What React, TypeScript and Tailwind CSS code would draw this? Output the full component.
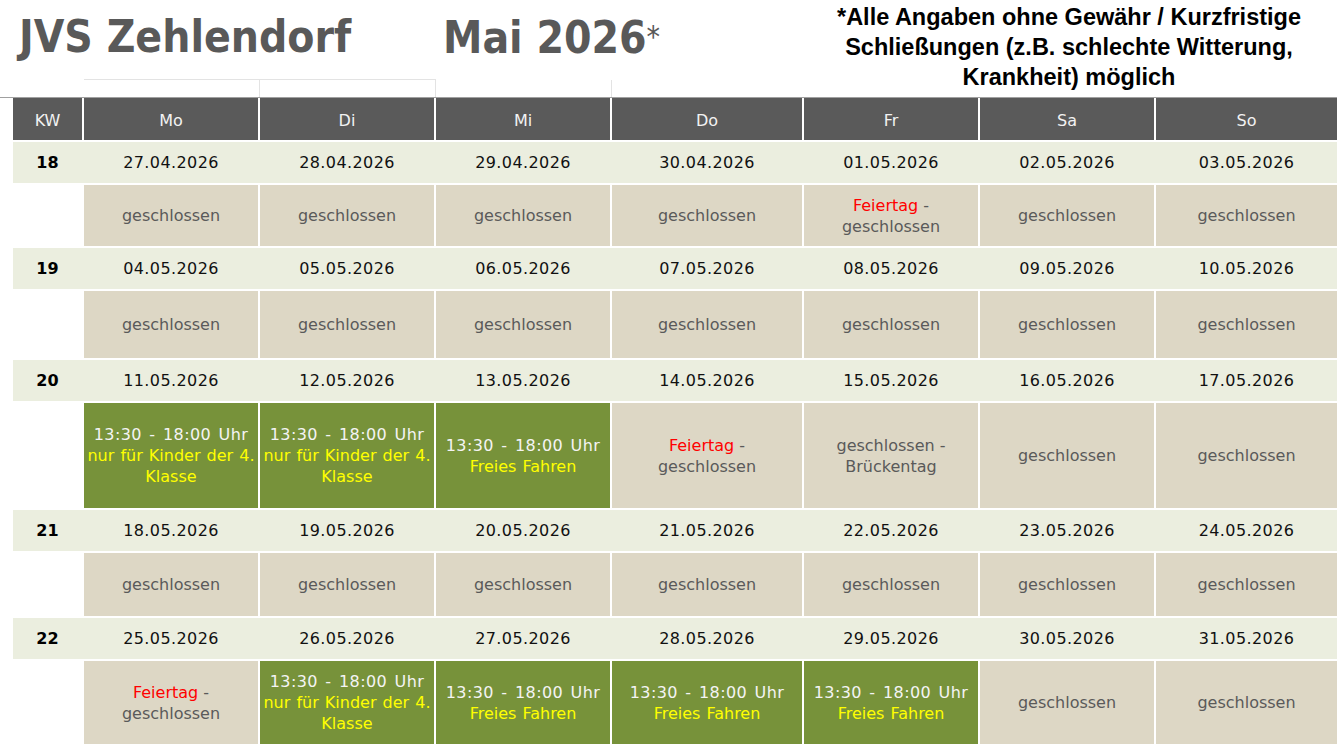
import React from 'react';

type Cell =
  | { kind: 'closed' }
  | { kind: 'holiday' }
  | { kind: 'bridge' }
  | { kind: 'open'; note: string };

interface Week {
  kw: number;
  dates: string[];
  cells: Cell[];
  height: string;
}

const C: Cell = { kind: 'closed' };
const HOL: Cell = { kind: 'holiday' };
const KIDS: Cell = { kind: 'open', note: 'nur für Kinder der 4. Klasse' };
const FREE: Cell = { kind: 'open', note: 'Freies Fahren' };

const weeks: Week[] = [
  {
    kw: 18,
    dates: ['27.04.2026', '28.04.2026', '29.04.2026', '30.04.2026', '01.05.2026', '02.05.2026', '03.05.2026'],
    cells: [C, C, C, C, HOL, C, C],
    height: 'h-[61px]',
  },
  {
    kw: 19,
    dates: ['04.05.2026', '05.05.2026', '06.05.2026', '07.05.2026', '08.05.2026', '09.05.2026', '10.05.2026'],
    cells: [C, C, C, C, C, C, C],
    height: 'h-[67px]',
  },
  {
    kw: 20,
    dates: ['11.05.2026', '12.05.2026', '13.05.2026', '14.05.2026', '15.05.2026', '16.05.2026', '17.05.2026'],
    cells: [KIDS, KIDS, FREE, HOL, { kind: 'bridge' }, C, C],
    height: 'h-[105px]',
  },
  {
    kw: 21,
    dates: ['18.05.2026', '19.05.2026', '20.05.2026', '21.05.2026', '22.05.2026', '23.05.2026', '24.05.2026'],
    cells: [C, C, C, C, C, C, C],
    height: 'h-[63px]',
  },
  {
    kw: 22,
    dates: ['25.05.2026', '26.05.2026', '27.05.2026', '28.05.2026', '29.05.2026', '30.05.2026', '31.05.2026'],
    cells: [HOL, KIDS, FREE, FREE, FREE, C, C],
    height: 'h-[83px]',
  },
];

const days = ['Mo', 'Di', 'Mi', 'Do', 'Fr', 'Sa', 'So'];

const cols = 'grid grid-cols-[69px_174px_174px_174px_190px_174px_174px_181px] gap-x-[2px]';

const StatusCell: React.FC<{ cell: Cell }> = ({ cell }) => {
  if (cell.kind === 'open') {
    return (
      <div className="bg-[#77923a] flex flex-col items-center justify-center text-center leading-[21px] whitespace-nowrap">
        <span className="text-[#f4f4f4] tracking-[0.4px] [word-spacing:2px]">13:30 - 18:00 Uhr</span>
        {cell.note === 'Freies Fahren' ? (
          <span className="text-[#ffff00] [word-spacing:1px]">Freies Fahren</span>
        ) : (
          <span className="text-[#ffff00] [word-spacing:1px]">
            nur für Kinder der 4.
            <br />
            Klasse
          </span>
        )}
      </div>
    );
  }
  return (
    <div className="bg-[#ddd7c5] flex items-center justify-center text-center leading-[21px] text-[#5a5a5a] px-2">
      {cell.kind === 'closed' && <span>geschlossen</span>}
      {cell.kind === 'holiday' && (
        <span>
          <span className="text-[#ff0000]">Feiertag</span> -<br />geschlossen
        </span>
      )}
      {cell.kind === 'bridge' && (
        <span>
          geschlossen -<br />Brückentag
        </span>
      )}
    </div>
  );
};

export default function App() {
  return (
    <div className="w-[1337px] h-[750px] overflow-hidden bg-white font-['DejaVu_Sans',Verdana,sans-serif] text-[16px]">
      {/* Title area */}
      <div className="flex h-[79px]">
        <div className="w-[443px] pl-[19px] pt-[9px] text-[#595959] font-bold text-[44px] leading-[56px] font-['DejaVu_Sans_Condensed','DejaVu_Sans',sans-serif] font-stretch-condensed">
          JVS Zehlendorf
        </div>
        <div className="w-[330px] pt-[9px] text-[#595959] leading-[56px] font-['DejaVu_Sans_Condensed','DejaVu_Sans',sans-serif] font-stretch-condensed">
          <span className="font-bold text-[44px]">Mai 2026</span>
          <span className="text-[30px] align-[6px]">*</span>
        </div>
        <div className="flex-1 pt-[2px] pl-[28px] text-center font-['Liberation_Sans',Arial,sans-serif] font-bold text-[23.5px] leading-[30px] text-black whitespace-nowrap">
          *Alle Angaben ohne Gewähr / Kurzfristige
          <br />
          Schließungen (z.B. schlechte Witterung,
          <br />
          Krankheit) möglich
        </div>
      </div>

      {/* Empty faint row */}
      <div className={`${cols} pl-[13px] h-[18px]`}>
        <div />
        <div className="border-t border-[#e3e3e3] -mr-[2px]" />
        <div className="border-t border-l border-[#e3e3e3] -ml-[1px] -mr-[2px]" />
        <div className="border-l border-[#e3e3e3] -ml-[1px] mt-[1px]" />
        <div className="border-l border-[#e3e3e3] -ml-[1px] mt-[1px]" />
      </div>

      {/* Header */}
      <div className="border-t border-[#a0a0a0]">
        <div className={`${cols} pl-[13px]`}>
          <div className="bg-[#5a5a5a] h-[42px] flex items-center justify-center pt-[3px] text-[#f2f2f2]">KW</div>
          {days.map((d) => (
            <div key={d} className="bg-[#5a5a5a] h-[42px] flex items-center justify-center pt-[3px] text-[#f2f2f2]">
              {d}
            </div>
          ))}
        </div>
      </div>

      {/* Weeks */}
      <div className="flex flex-col gap-y-[2px] pt-[2px] pl-[13px]">
        {weeks.map((w) => (
          <React.Fragment key={w.kw}>
            <div className={`${cols} bg-[#ebeedf] h-[41px] items-center pt-[1px]`}>
              <div className="text-center font-bold text-black">{w.kw}</div>
              {w.dates.map((d) => (
                <div key={d} className="text-center text-[#111] tracking-[0.4px]">
                  {d}
                </div>
              ))}
            </div>
            <div className={`${cols} ${w.height}`}>
              <div />
              {w.cells.map((c, i) => (
                <StatusCell key={i} cell={c} />
              ))}
            </div>
          </React.Fragment>
        ))}
      </div>
    </div>
  );
}
